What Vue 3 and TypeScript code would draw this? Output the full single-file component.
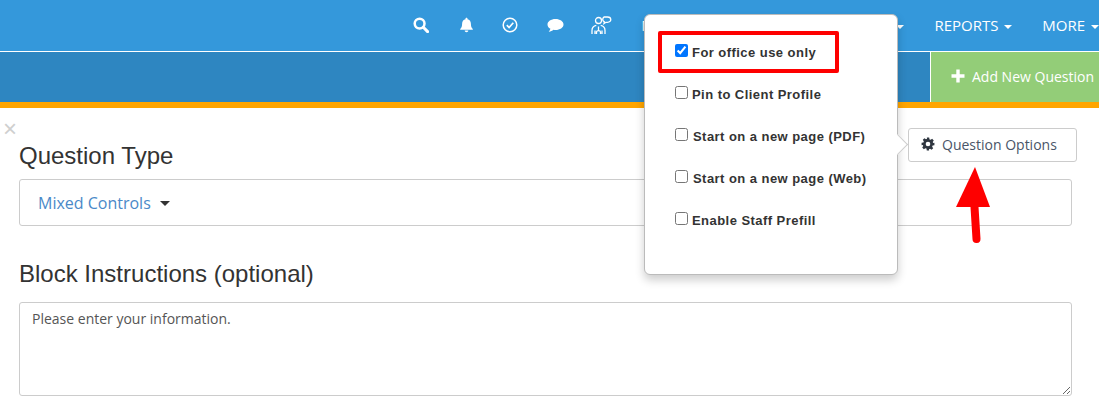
<script setup lang="ts">
const navIcons = ['search', 'bell', 'check', 'comment', 'people'] as const
const options = [
  { label: 'For office use only', checked: true },
  { label: 'Pin to Client Profile', checked: false },
  { label: 'Start on a new page (PDF)', checked: false },
  { label: 'Start on a new page (Web)', checked: false },
  { label: 'Enable Staff Prefill', checked: false },
]
const instructions = 'Please enter your information.'
</script>

<template>
  <div class="page">
    <header class="nav">
      <div class="icons">
        <span v-for="name in navIcons" :key="name" class="nav-icon">
          <svg v-if="name === 'search'" width="16" height="16" viewBox="0 0 16 16">
            <circle cx="6.6" cy="6.6" r="4.9" fill="none" stroke="#fff" stroke-width="2.5" />
            <path d="M10.3 10.3 14.6 14.6" stroke="#fff" stroke-width="3" stroke-linecap="round" />
          </svg>
          <svg v-else-if="name === 'bell'" width="15" height="16" viewBox="0 0 15 16">
            <path d="M7.5 0.8c.6 0 1 .4 1 1v.5c2.2.5 3.4 2.2 3.4 4.5 0 2.8.6 3.8 1.9 5.2v.7H1.200v-.7c1.300-1.400 1.900-2.400 1.900-5.200 0-2.300 1.200-4 3.400-4.500v-.5c0-.6.4-1 1-1Z" fill="#fff" />
            <path d="M5.700 13.600h3.600c0 1-.8 1.700-1.800 1.700s-1.800-.7-1.800-1.700Z" fill="#fff" />
          </svg>
          <svg v-else-if="name === 'check'" width="16" height="16" viewBox="0 0 16 16">
            <circle cx="8" cy="8" r="6.800" fill="none" stroke="#fff" stroke-width="1.500" />
            <path d="M4.800 8.200 7.100 10.500 11.300 5.800" fill="none" stroke="#fff" stroke-width="1.700" />
          </svg>
          <svg v-else-if="name === 'comment'" width="17" height="15" viewBox="0 0 17 15">
            <path d="M8.500 1C13 1 16.500 3.400 16.500 6.500S13 12 8.500 12c-.7 0-1.300 0-2-.2-1.200 1-2.700 1.800-4.800 2 .9-.9 1.500-1.800 1.700-3C1.500 9.800.5 8.300.5 6.500.5 3.400 4 1 8.500 1Z" fill="#fff" />
          </svg>
          <svg v-else width="21" height="18" viewBox="0 0 21 18" fill="none" stroke="#fff" stroke-width="1.300">
            <circle cx="7.500" cy="4.500" r="3" />
            <path d="M13 1h3.500c1.800 0 3.300 1.100 3.300 2.700S18.300 6.300 16.500 6.300H15l-2 1.300.4-1.700c-1-.5-1.700-1.300-1.700-2.300 0-1.100.5-2 1.300-2.600Z" />
            <path d="M1 18v-3.500c0-2.700 2-4.800 4.300-5.200M14 18v-3.500c0-2.700-2-4.800-4.300-5.200" />
            <path d="M4 18v-3.500M11 18v-3.500M7.500 10.500v4M5.500 18v-2c0-.8.900-1.300 2-1.300s2 .5 2 1.300v2" />
          </svg>
        </span>
      </div>
      <div class="links">
        <span class="nav-link">MESSAGES</span>
        <span class="nav-link">FORMS</span>
        <span class="nav-link">CLIENTS <i class="caret" /></span>
        <span class="nav-link">REPORTS <i class="caret" /></span>
        <span class="nav-link">MORE <i class="caret" /></span>
      </div>
    </header>

    <div class="subbar">
      <button class="add-btn" type="button">
        <svg width="14" height="14" viewBox="0 0 14 14"><path d="M7 0.500v13M0.500 7h13" stroke="#fff" stroke-width="3.400" /></svg>
        <span>Add New Question</span>
      </button>
    </div>

    <main class="content">
      <span class="close">×</span>
      <div class="type-row">
        <h2 class="heading first">Question Type</h2>
        <button class="options-btn" type="button">
          <svg width="14" height="14" viewBox="0 0 24 24">
            <path fill="#2f3640" fill-rule="evenodd" d="M10 1h4l.6 3.100 1.900.8 2.600-1.800 2.800 2.800-1.800 2.600.8 1.900L23 10v4l-3.100.6-.8 1.900 1.800 2.600-2.800 2.800-2.600-1.800-1.900.8L13.900 23h-4l-.5-3.100-1.900-.8-2.600 1.800-2.800-2.800 1.800-2.600-.8-1.900L1 14v-4l3.100-.6.8-1.900-1.800-2.600 2.800-2.800 2.600 1.800 1.900-.8L10 1Zm2 7a4 4 0 1 0 0 8 4 4 0 0 0 0-8Z" />
          </svg>
          <span>Question Options</span>
        </button>
      </div>
      <div class="select-box">
        <span class="select-value">Mixed Controls</span>
        <i class="caret dark" />
      </div>
      <h2 class="heading second">Block Instructions (optional)</h2>
      <textarea class="instructions" :value="instructions" />
    </main>

    <aside class="popover">
      <label v-for="option in options" :key="option.label" class="option">
        <input type="checkbox" :checked="option.checked" />
        <span>{{ option.label }}</span>
      </label>
      <span class="highlight" />
      <span class="popover-arrow" />
    </aside>

    <svg class="annotation" width="36" height="88" viewBox="0 0 36 88">
      <path d="M20 0 35 40H1Z" fill="#fe0000" />
      <path d="M19.500 40 21.500 72" stroke="#fe0000" stroke-width="8" stroke-linecap="round" />
    </svg>
  </div>
</template>

<style>
html, body { margin: 0; background: #fff; overflow: hidden; }
</style>

<style scoped>
.page {
  position: relative;
  width: 1099px;
  height: 408px;
  overflow: hidden;
  background: #fff;
  font-family: "Open Sans", sans-serif;
}
.nav {
  display: flex;
  align-items: center;
  box-sizing: border-box;
  height: 52px;
  padding: 0 0 1px 399px;
  background: #3498db;
  border-bottom: 1px solid #fff;
  color: #fff;
  font-size: 15px;
  white-space: nowrap;
}
.icons { display: flex; align-items: center; }
.nav-icon { display: flex; justify-content: center; width: 45px; }
.nav-icon:nth-child(1) svg { margin-left: -2px; }
.nav-icon:nth-child(3) svg { margin-left: -3px; }
.nav-icon:nth-child(4) svg { margin-left: -3px; }
.links {
  display: flex;
  flex: 1;
  justify-content: flex-end;
  gap: 30px;
  min-width: 0;
}
.links .nav-link:first-child { margin-right: 6px; }
.caret {
  display: inline-block;
  width: 0;
  height: 0;
  margin-left: 2px;
  vertical-align: middle;
  border-top: 4px solid currentColor;
  border-left: 4px solid transparent;
  border-right: 4px solid transparent;
}
.subbar {
  display: flex;
  justify-content: flex-end;
  box-sizing: border-box;
  height: 56px;
  background: #2e86c1;
  border-bottom: 6px solid #ffa500;
}
.add-btn {
  display: flex;
  align-items: center;
  gap: 7px;
  width: 169px;
  padding: 0 0 2px 20px;
  border: 0;
  border-left: 1px solid #fff;
  background: #93cd78;
  color: #fff;
  font: 14px "Open Sans", sans-serif;
  white-space: nowrap;
}
.content { position: relative; padding: 20px 27px 0 19px; }
.close {
  position: absolute;
  left: 3px;
  top: 9px;
  color: #cfcfcf;
  font: 400 24px/24px "Liberation Sans", sans-serif;
}
.type-row { display: flex; justify-content: space-between; align-items: flex-start; margin-right: -5px; }
.heading {
  margin: 0;
  color: #333;
  font: 400 24px/26px "Liberation Sans", Arial, sans-serif;
}
.heading.first { margin-top: 15px; }
.heading.second { margin: 35px 0 15px; }
.options-btn {
  display: flex;
  align-items: center;
  gap: 7px;
  box-sizing: border-box;
  width: 169px;
  height: 34px;
  padding: 0 0 2px 12px;
  border: 1px solid #ccc;
  border-radius: 3px;
  background: #fff;
  color: #4a5568;
  font: 14px "Open Sans", sans-serif;
  white-space: nowrap;
}
.select-box {
  display: flex;
  align-items: center;
  box-sizing: border-box;
  height: 47px;
  margin-top: 10px;
  padding-left: 18px;
  border: 1px solid #ccc;
  border-radius: 3px;
}
.select-value { color: #4a89c8; font-size: 16px; font-weight: 400; }
.caret.dark { margin-left: 9px; margin-top: 2px; border-top: 5px solid #333; border-left: 5px solid transparent; border-right: 5px solid transparent; color: #333; }
.instructions {
  display: block;
  box-sizing: border-box;
  width: 100%;
  height: 94px;
  margin: 0;
  padding: 6px 12px;
  border: 1px solid #ccc;
  border-radius: 3px;
  outline: 0;
  color: #555;
  font: 14px/20px "Open Sans", sans-serif;
}
.popover {
  position: absolute;
  left: 644px;
  top: 14px;
  box-sizing: border-box;
  width: 254px;
  height: 261px;
  padding-top: 15px;
  background: #fff;
  border: 1px solid #bbb;
  border-radius: 6px;
  box-shadow: 0 5px 10px rgba(0, 0, 0, 0.2);
}
.option {
  display: flex;
  align-items: center;
  height: 42px;
  padding-left: 30px;
  color: #333;
  font: bold 13px "Liberation Sans", Arial, sans-serif;
  letter-spacing: 0.450px;
  white-space: nowrap;
}
.option input { width: 13px; height: 13px; margin: 0 4px 2px 0; }
.option span { padding-top: 2px; }
.option:nth-child(3) span, .option:nth-child(4) span { padding-left: 1px; }
.highlight {
  position: absolute;
  left: 13px;
  top: 16px;
  width: 181px;
  height: 42px;
  box-sizing: border-box;
  border: 4px solid #fe0000;
  border-radius: 2px;
  pointer-events: none;
}
.popover-arrow {
  position: absolute;
  right: -8px;
  top: 122px;
  width: 14px;
  height: 14px;
  background: #fff;
  border-top: 1px solid #ccc;
  border-right: 1px solid #ccc;
  transform: rotate(45deg);
}
.annotation { position: absolute; left: 955px; top: 167px; }
</style>
